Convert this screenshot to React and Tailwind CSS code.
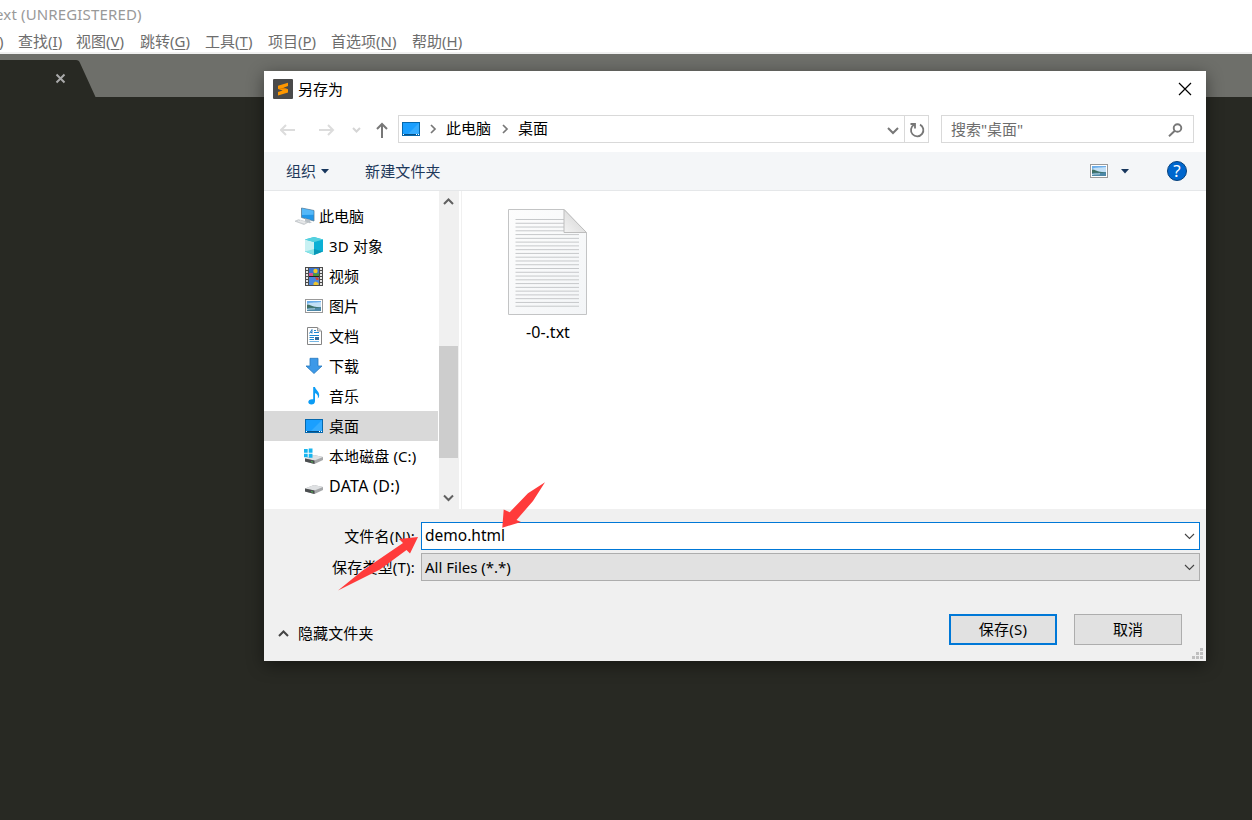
import React, { useState } from "react";

const menus = [
  { label: "查找", hotkey: "I", w: "w-[58px]" },
  { label: "视图", hotkey: "V", w: "w-16" },
  { label: "跳转", hotkey: "G", w: "w-[65px]" },
  { label: "工具", hotkey: "T", w: "w-[63px]" },
  { label: "项目", hotkey: "P", w: "w-[63px]" },
  { label: "首选项", hotkey: "N", w: "w-[81px]" },
  { label: "帮助", hotkey: "H", w: "w-16" },
];

function SublimeIcon() {
  return (
    <svg width="20" height="20" viewBox="0 0 20 20">
      <rect width="20" height="20" rx="1" fill="#4a4a4a" />
      <path d="M5 6.8 15 3.8V7l-4.5 1.7L15 10.2v3.4L5 16.4v-3.3l4.7-1.6L5 10z" fill="#ff9800" />
      <path d="M5 10l10 .2-4.5-1.5z" fill="#d87a00" />
    </svg>
  );
}

function DesktopIcon() {
  return (
    <svg width="18" height="14" viewBox="0 0 18 14">
      <rect width="18" height="14" fill="#0568ad" />
      <rect x="1" y="1" width="16" height="11" fill="#1a9fff" />
      <path d="M17 1v11H6z" fill="#35acff" />
      <path d="M1 12.5h1M14 12.5h1M16 12.5h1" stroke="#fff" />
      <path d="M2 12.5h12" stroke="#064f85" />
    </svg>
  );
}

function PictureIcon() {
  return (
    <svg width="18" height="14" viewBox="0 0 18 14">
      <rect x=".5" y=".5" width="17" height="13" fill="#fff" stroke="#999" />
      <rect x="2" y="2" width="14" height="10" fill="#6caeea" />
      <path d="M2 5c3-2 6-1 14-2v5H2z" fill="#c3e0f7" />
      <path d="M2 5.5c3 0 5 1.7 8 2.2l6 .7V10H2z" fill="#3e6f63" />
      <path d="M2 9c4-.4 9 0 14-.5V12H2z" fill="#4d88a8" />
      <path d="M2 10.5c3-.8 5-.3 8-.7" stroke="#b9d7df" fill="none" />
    </svg>
  );
}

function PcIcon() {
  return (
    <svg width="20" height="18" viewBox="0 0 20 18">
      <path d="M6.5 1 19 3.5V14L6.5 10.5z" fill="#2196e8" stroke="#5d7d95" strokeWidth=".8" />
      <path d="M7 1.5l11.5 2.3v4L7 8z" fill="#55b8f8" />
      <path d="m10 11.5 5 1.2v1.7l2 .8-2.5 1-4.5-2z" fill="#b9c0c6" />
      <path d="m0 14.2 3.5-1.5 9.5 2.6-4 2.2z" fill="#d6d9dc" stroke="#b5babe" strokeWidth=".6" />
      <path d="m3 14 7 2M5 13.5l5 1.7" stroke="#f5f5f5" strokeWidth=".6" />
    </svg>
  );
}

function CubeIcon() {
  return (
    <svg width="18" height="18" viewBox="0 0 18 18">
      <path d="M9 0 18 2.6v12L9 18l-9-3.4v-12z" fill="#27bfd7" />
      <path d="M0 2.6 9 5v9.4l-9 .2z" fill="#c8f1f3" />
      <path d="M9 5l9-2.4v12L9 14.4z" fill="#0bb0d5" />
      <path d="M0 2.6 9 0l9 2.6L9 5z" fill="#55d1df" />
      <path d="M0 14.6 9 12v6z" fill="#87e3e6" />
      <path d="M9 12v6l9-3.4z" fill="#0898b7" />
    </svg>
  );
}

function VideoIcon() {
  return (
    <svg width="18" height="19" viewBox="0 0 18 19">
      <rect width="18" height="19" fill="#4b4b4b" />
      <path d="M2 1v18M16 1v18" stroke="#e5e5e5" strokeWidth="2" strokeDasharray="2 1" />
      <rect x="4" y="1" width="10" height="8" fill="#3d74d0" />
      <rect x="4" y="10" width="10" height="8" fill="#4a86dc" />
      <circle cx="10.5" cy="4" r="2.2" fill="#f2c925" />
      <path d="M4 6h4v3H4z" fill="#dc4f8c" />
      <path d="M8 6.5h6V9H8z" fill="#4b9a37" />
      <path d="M4 9.5h10" stroke="#222" />
      <path d="M10 10.5h3.5V13h-2z" fill="#e04329" />
      <path d="M8.5 18v-2l2-1.5 3 1.5v2z" fill="#efc52d" />
    </svg>
  );
}

function DocIcon() {
  return (
    <svg width="15" height="18" viewBox="0 0 15 18">
      <path d="M.5.5h10l4 3.5v13.5H.5z" fill="#fff" stroke="#858585" />
      <path d="M10.5.5V4h4" fill="#ddd" stroke="#999" />
      <path d="m2.5 6.5 2.5-4v4M3.5 5.5H5" stroke="#1675bd" fill="none" strokeWidth=".9" />
      <path d="M7 3.5h2M7 5.5h5M2.5 8.5H12M2.5 10.5H7M2.5 12.5H7" stroke="#1b88d2" />
      <path d="M2.5 14.5H12" stroke="#75b6e3" />
      <path d="M8 10h4v3H8z" fill="#336c9c" />
    </svg>
  );
}

function DownloadIcon() {
  return (
    <svg width="18" height="18" viewBox="0 0 18 18">
      <path d="M5 1.3h8V9h4l-8 7.5L1 9h4z" fill="#3c99e8" stroke="#2679be" strokeWidth=".8" />
    </svg>
  );
}

function MusicIcon() {
  return (
    <svg width="12" height="18" viewBox="0 0 12 18">
      <path d="M5.2 0H7c.3 2.5 4.5 4.5 4.2 8.5-.1 1.5-.8 2.5-1.5 3 1-3-.8-4.5-2.7-5.5v8c0 2.4-1.5 3.5-3.6 3.5C1.5 17.5.3 16.5.3 15c0-2 2.2-3.2 4.9-2.7z" fill="#0b9cf5" />
    </svg>
  );
}

function DriveIcon({ windows }) {
  return (
    <svg width="20" height="16" viewBox="0 0 20 16">
      <path d="M1 10.5 10 7l9 2v3l-8.5 4L1 13.5z" fill="#a5a7a9" />
      <path d="M1 10.5 10 7l9 2-8.5 3.5z" fill="#dfe1e3" />
      <path d="m1 10.5 9.5 2V16L1 13.5z" fill="#4b4e50" />
      <path d="m7 13.3 2 .4v.8l-2-.4z" fill="#53dc53" />
      {windows && <path d="M0 1h3.7v3.7H0zM4.7.5h3.8v4.2H4.7zM0 5.7h3.7v3.6H0zM4.7 5.7h3.8v4H4.7z" fill="#18b5ef" />}
    </svg>
  );
}

const folders = [
  { name: "3D 对象", icon: <CubeIcon />, style: "tracking-[0.15px]" },
  { name: "视频", icon: <VideoIcon /> },
  { name: "图片", icon: <PictureIcon /> },
  { name: "文档", icon: <DocIcon /> },
  { name: "下载", icon: <DownloadIcon /> },
  { name: "音乐", icon: <MusicIcon /> },
  { name: "桌面", icon: <DesktopIcon /> },
  { name: "本地磁盘 (C:)", icon: <DriveIcon windows />, style: "tracking-[0.1px]" },
  { name: "DATA (D:)", icon: <DriveIcon />, style: "text-base tracking-[0.3px]" },
];

function Chevron({ d, w, h, color = "#606060", stroke = 2 }) {
  return (
    <svg className="shrink-0" width={w} height={h} viewBox={`0 0 ${w} ${h}`} fill="none" stroke={color} strokeWidth={stroke}>
      <path d={d} />
    </svg>
  );
}

function TextFileIcon() {
  const lines = [];
  for (let i = 0; i < 24; i++) {
    lines.push(10.5 + i * 3.77);
  }
  return (
    <svg width="80" height="107" viewBox="0 0 80 107">
      <defs>
        <linearGradient id="paper" x1="0" y1="0" x2="1" y2="1">
          <stop offset="0" stopColor="#fdfdfd" />
          <stop offset="1" stopColor="#f3f5f7" />
        </linearGradient>
        <linearGradient id="fold" x1="0" y1="1" x2="1" y2="0">
          <stop offset="0" stopColor="#f3f3f3" />
          <stop offset="1" stopColor="#cfcfcf" />
        </linearGradient>
      </defs>
      <path d="M.5.5H56L78.5 24v81.5H.5z" fill="url(#paper)" stroke="#c3c4c5" />
      {lines.map((y, i) => (
        <path key={y} d={i < 4 ? `M7.5 ${y}H56` : `M7.5 ${y}H71`} stroke="#c6c8ca" />
      ))}
      <path d="M56 .5V23.5H78.5z" fill="url(#fold)" stroke="#bdbdbd" />
    </svg>
  );
}

function Sidebar() {
  const [selected, setSelected] = useState("桌面");
  return (
    <div className="w-[174px] pt-2.5">
      <div className="flex h-[30px] items-center pl-[31px]">
        <PcIcon />
        <span className="ml-1">此电脑</span>
      </div>
      {folders.map(f => (
        <div
          key={f.name}
          onClick={() => setSelected(f.name)}
          className={`flex h-[30px] items-center pl-10 whitespace-nowrap ${selected === f.name ? "bg-[#d9d9d9]" : ""}`}
        >
          <span className="flex w-5 justify-center">{f.icon}</span>
          <span className={`ml-[5px] ${f.style || ""}`}>{f.name}</span>
        </div>
      ))}
    </div>
  );
}

function SaveDialog() {
  const [filename, setFilename] = useState("demo.html");

  return (
    <div className="absolute left-[264px] top-[71px] flex h-[590px] w-[942px] flex-col bg-white text-black shadow-[0_4px_16px_rgba(0,0,0,0.45)]">
      {/* Title */}
      <div className="flex h-9 shrink-0 items-center pr-[14px] pl-[9px]">
        <SublimeIcon />
        <span className="ml-[5px]">另存为</span>
        <span className="ml-auto">
          <Chevron d="M1 1 13 13M13 1 1 13" w={14} h={14} color="#000" stroke={1.2} />
        </span>
      </div>

      {/* Navigation */}
      <div className="flex h-[45px] shrink-0 items-start pt-2 pl-4">
        <div className="flex h-[30px] w-[118px] items-center">
          <Chevron d="M15 7H1M6 2 1 7l5 5" w={16} h={14} color="#dcdcdc" />
          <span className="ml-[23px]"><Chevron d="M0 7h14M9 2l5 5-5 5" w={16} h={14} color="#dcdcdc" /></span>
          <span className="ml-[17px]"><Chevron d="m1 1 3.5 3.5L8 1" w={9} h={6} color="#d5d5d5" /></span>
          <span className="ml-[14px]"><Chevron d="M7 16V2M2 7l5-5 5 5" w={13} h={16} color="#777" /></span>
        </div>
        <div className="flex h-7 w-[531px] items-center border border-[#d9d9d9] pl-[3px]">
          <DesktopIcon />
          <span className="ml-[10px]"><Chevron d="m1 1 4 4-4 4" w={7} h={10} color="#777" stroke={1.7} /></span>
          <span className="mb-0.5 ml-[9px]">此电脑</span>
          <span className="ml-[11px]"><Chevron d="m1 1 4 4-4 4" w={7} h={10} color="#777" stroke={1.7} /></span>
          <span className="mb-0.5 ml-[9px]">桌面</span>
          <span className="mt-1 mr-[5px] ml-auto"><Chevron d="m1 1 5 5 5-5" w={12} h={8} color="#777" /></span>
          <div className="flex h-full w-6 items-center justify-center border-l border-[#d9d9d9]">
            <svg className="mt-0.5" width="16" height="16" viewBox="0 0 16 16" fill="none" stroke="#777" strokeWidth="1.8">
              <path d="M11 2.6A6.2 6.2 0 1 1 5 2.8M1.5 2H6v4.5" />
            </svg>
          </div>
        </div>
        <div className="ml-3 flex h-7 w-[253px] items-center justify-between border border-[#d9d9d9] pr-[10px] pl-[9px] text-[#6d6d6d]">
          <span>搜索"桌面"</span>
          <svg className="mt-0.5" width="15" height="14" viewBox="0 0 15 14" fill="none" stroke="#777" strokeWidth="1.9">
            <circle cx="9.5" cy="5" r="3.8" />
            <path d="M6.8 7.8 1 13.3" />
          </svg>
        </div>
      </div>

      {/* Toolbar */}
      <div className="flex h-[39px] shrink-0 items-center border-b border-[#e5e7e9] bg-[#f4f6f8] pl-[22px] text-[#1e395b]">
        <span>组织</span>
        <svg className="ml-[5px]" width="8" height="5"><path d="M0 0h8L4 4.5z" fill="#17365d" /></svg>
        <span className="ml-9 tracking-[0.15px]">新建文件夹</span>
        <span className="ml-auto"><PictureIcon /></span>
        <svg className="ml-[13px]" width="8" height="5"><path d="M0 0h8L4 4.5z" fill="#17365d" /></svg>
        <span className="mr-[19px] ml-[38px] flex size-5 items-center justify-center rounded-full border border-[#07417c] bg-[#0067ce] pb-px text-[17px] leading-none text-white">?</span>
      </div>

      {/* Files */}
      <div className="flex h-[318px] shrink-0 overflow-hidden">
        <Sidebar />
        <div className="ml-px flex w-5 flex-col items-center bg-[#f0f0f0] pr-0.5">
          <div className="flex h-[22px] items-center"><Chevron d="m1 6 4.5-4.5L10 6" w={11} h={8} /></div>
          <div className="mt-[133px] -mr-px h-28 w-[19px] bg-[#cdcdcd]" />
          <div className="mt-auto flex h-[22px] items-center"><Chevron d="m1 1.5 4.5 4.5L10 1.5" w={11} h={8} /></div>
        </div>
        <div className="ml-0.5 border-l border-[#f0f0f0] pt-[18px] pl-[46px]">
          <div className="flex w-20 flex-col items-center">
            <TextFileIcon />
            <span className="mt-1.5 text-base leading-5">-0-.txt</span>
          </div>
        </div>
      </div>

      {/* Name and type */}
      <div className="flex flex-1 flex-col bg-[#f0f0f0] pt-[13px]">
        <div className="flex h-7">
          <label className="w-[157px] pr-1.5 text-right leading-7 tracking-[0.2px]">文件名(N):</label>
          <div className="flex w-[779px] items-center border border-[#0078d7] bg-white pr-1 pl-[3px]">
            <input
              className="mb-0.5 min-w-0 flex-1 bg-transparent text-[15.5px] outline-none"
              value={filename}
              onChange={e => setFilename(e.target.value)}
            />
            <span className="mt-0.5"><Chevron d="m1 1 4.5 4.5L10 1" w={11} h={8} color="#444" stroke={1.1} /></span>
          </div>
        </div>
        <div className="mt-[3px] flex h-7">
          <label className="w-[157px] pr-1.5 text-right leading-7 tracking-[0.2px]">保存类型(T):</label>
          <div className="flex w-[779px] items-center justify-between border border-[#adadad] bg-[#e1e1e1] pr-1 pl-[3px]">
            <span>All Files (*.*)</span>
            <span className="mt-0.5"><Chevron d="m1 1 4.5 4.5L10 1" w={11} h={8} color="#444" stroke={1.1} /></span>
          </div>
        </div>
        <div className="mt-[33px] flex h-[31px]">
          <div className="flex h-[39px] items-center pl-[14px]">
            <Chevron d="m1 6 4.5-4.5L10 6" w={11} h={8} color="#444" />
            <span className="mb-0.5 ml-[9px] tracking-[0.1px]">隐藏文件夹</span>
          </div>
          <button className="ml-auto h-[31px] w-[108px] border-2 border-[#0078d7] bg-[#e1e1e1] pb-0.5 tracking-[0.3px]">保存(S)</button>
          <button className="mr-6 ml-[17px] h-[31px] w-[108px] border border-[#adadad] bg-[#e1e1e1] pb-0.5">取消</button>
        </div>
        <svg className="mt-[3px] mr-[3px] ml-auto" width="11" height="11" fill="#bfbfbf">
          <path d="M8 0h3v3H8zM4 4h3v3H4zM8 4h3v3H8zM0 8h3v3H0zM4 8h3v3H4zM8 8h3v3H8z" />
        </svg>
      </div>
    </div>
  );
}

export default function App() {
  return (
    <div className="relative flex h-[820px] w-[1252px] flex-col overflow-hidden bg-[#282923] font-['Noto_Sans','Noto_Sans_CJK_SC',sans-serif] text-[15px] leading-5">
      <div className="h-[54px] shrink-0 border-b-2 border-[#f0f0f0] bg-white">
        <div className="-ml-[5px] h-[29px] pt-1 tracking-[0.15px] text-[#999]">ext (UNREGISTERED)</div>
        <div className="flex h-6 items-center text-[#6d6d6d]">
          <span className="-ml-px w-[19px]">)</span>
          {menus.map(m => (
            <span key={m.label} className={`${m.w} shrink-0 whitespace-nowrap`}>
              {m.label}(<span className="underline underline-offset-2">{m.hotkey}</span>)
            </span>
          ))}
        </div>
      </div>

      {/* Editor tab */}
      <div className="flex h-[43px] shrink-0 items-end bg-[#6e6f6a]">
        <svg width="97" height="37" viewBox="0 0 97 37">
          <path d="M0 0h76q3 0 4 3l15.5 34H0z" fill="#282923" />
          <path d="m56.5 14.5 8 8M64.5 14.5l-8 8" stroke="#aaa" strokeWidth="2" />
        </svg>
      </div>

      <SaveDialog />

      {/* Red pointers over the file name field */}
      <svg className="absolute top-[480px] left-[335px]" width="215" height="115" viewBox="0 0 215 115" fill="#ff3b3b">
        <path d="M210 2.3 198 21l-16.5 19 4.5 2-18.7 5.7 1.4-18.2 6 2.7 18.3-19z" />
        <path d="M3 110.5 27 91l41-28-4-4 19-2-8 16.500-3.500-3.500-26.500 19.500z" />
      </svg>
    </div>
  );
}
